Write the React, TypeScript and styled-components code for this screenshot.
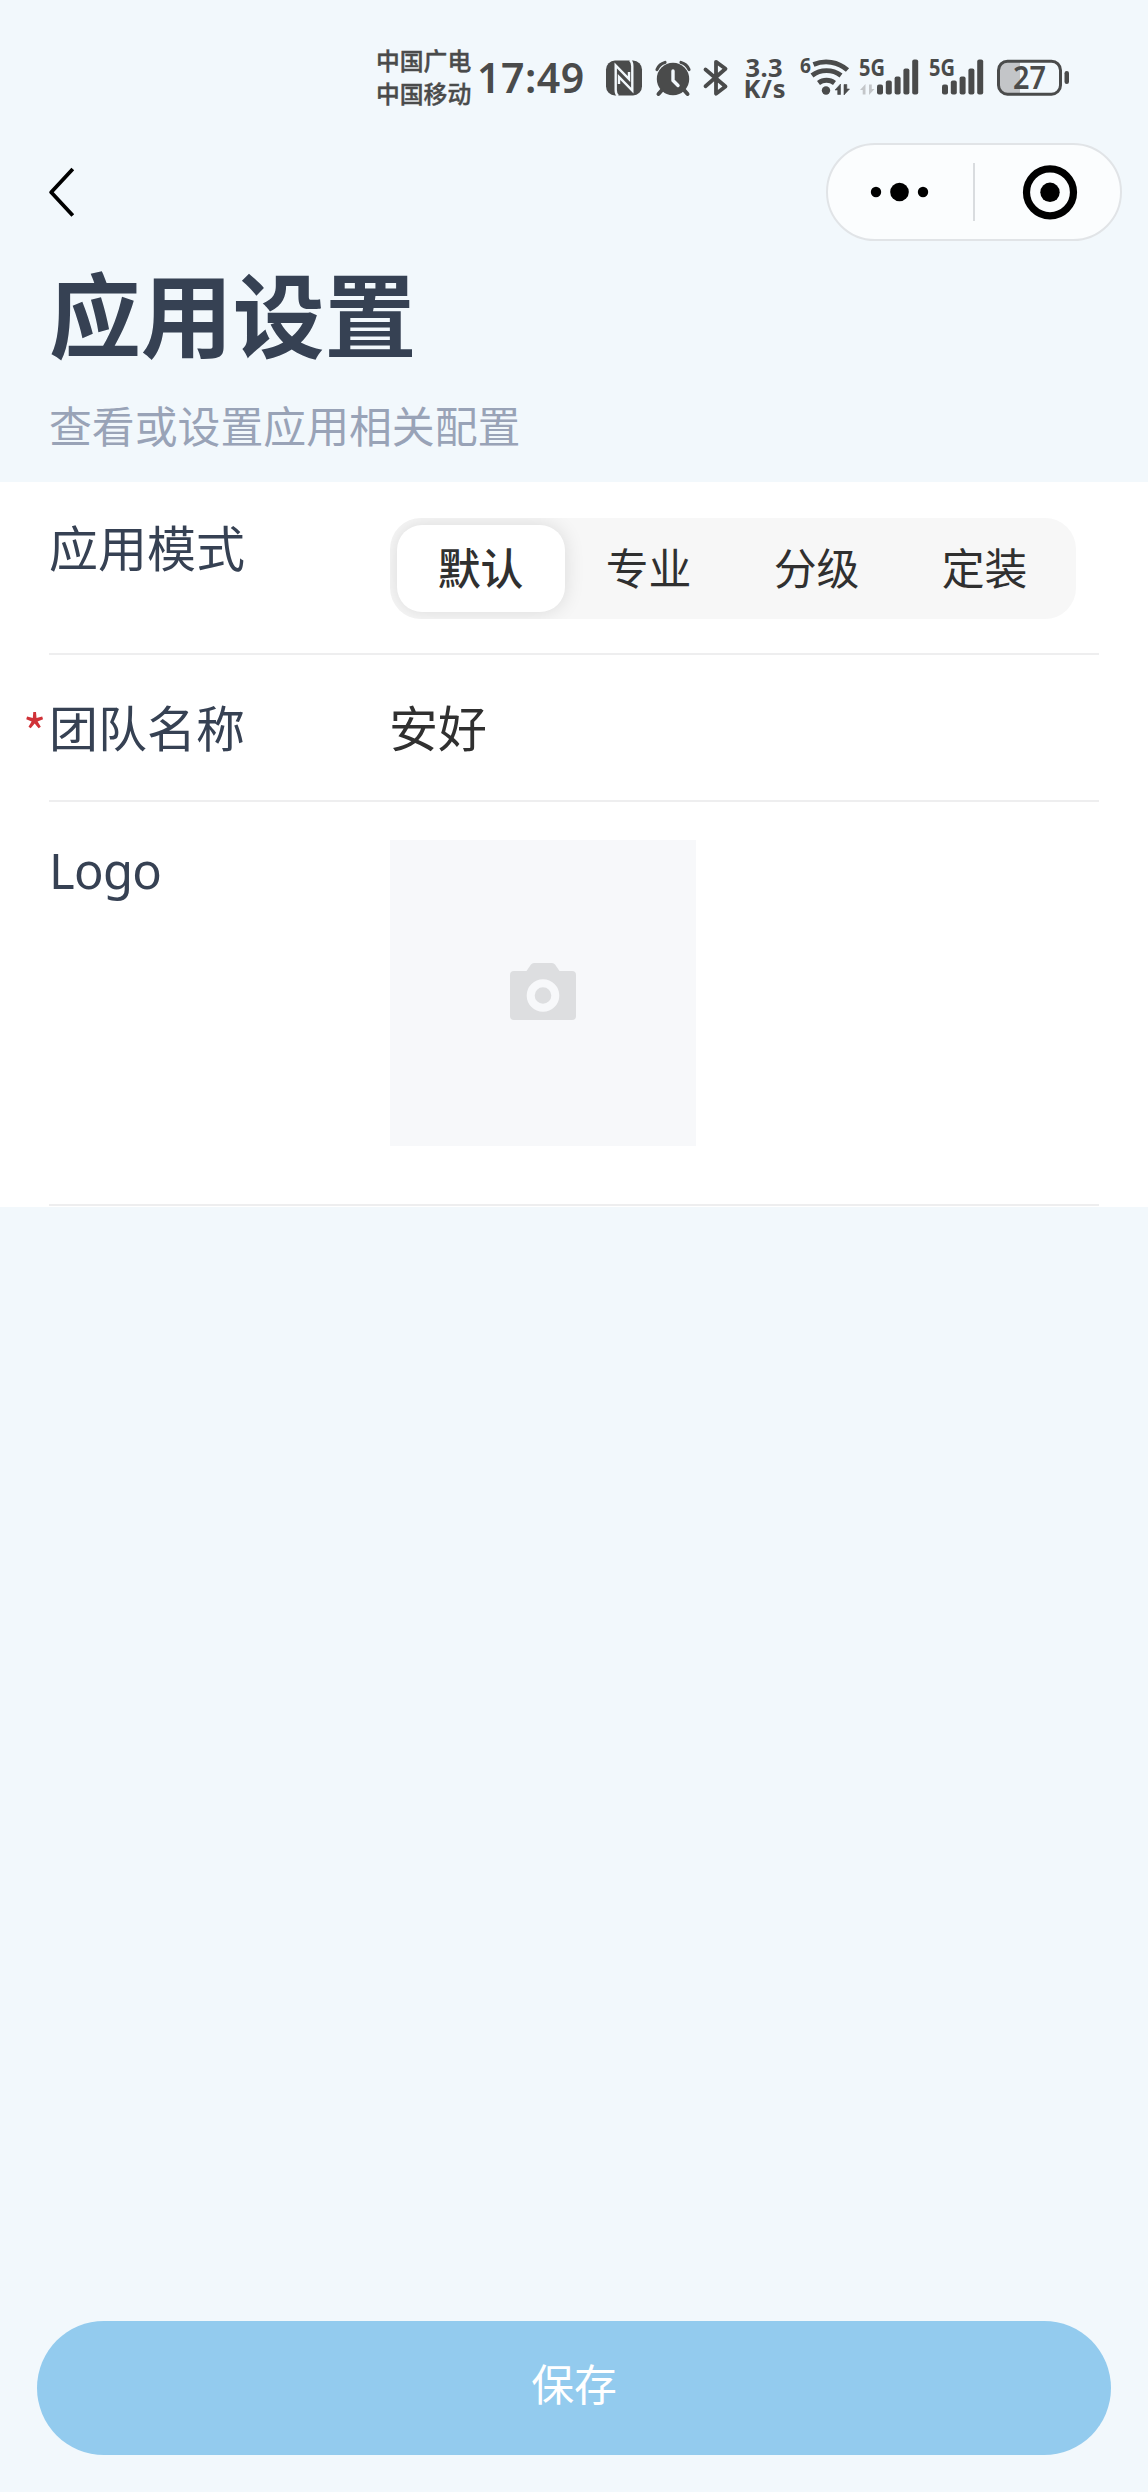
import React from 'react';
import styled, { createGlobalStyle } from 'styled-components';

const INK = '#4a4b4b';

const GlobalStyle = createGlobalStyle`
  *, *::before, *::after { box-sizing: border-box; }
  html, body { margin: 0; padding: 0; }
  body {
    background: #f2f8fc;
    font-family: "Noto Sans CJK SC", "Noto Sans", sans-serif;
    -webkit-font-smoothing: antialiased;
  }
  button { font: inherit; border: 0; padding: 0; margin: 0; background: none; }
`;

const Screen = styled.div`
  width: 1148px;
  height: 2492px;
  display: flex;
  flex-direction: column;
  background: #f2f8fc;
  overflow: hidden;
`;

const StatusBar = styled.header`
  height: 143px;
  padding: 46px 0 0 376px;
  display: flex;
  align-items: flex-start;
  color: ${INK};
`;

const Carriers = styled.div`
  width: 101px;
  margin-top: -3px;
  display: flex;
  flex-direction: column;
  align-items: flex-start;
  font-size: 23.8px;
  line-height: 33px;
  font-weight: 500;
  white-space: nowrap;
  -webkit-text-stroke: 0.4px ${INK};
`;

const Clock = styled.div`
  width: 128px;
  height: 62px;
  font-family: "Noto Sans", sans-serif;
  font-weight: 600;
  font-size: 41px;
  line-height: 62px;
  letter-spacing: 0.5px;
  white-space: nowrap;
`;

const StatusIcons = styled.svg`
  display: block;
  width: 480px;
  height: 62px;
  flex: none;
`;

const NavBar = styled.nav`
  height: 98px;
  padding: 0 26px 0 49px;
  display: flex;
  align-items: center;
  justify-content: space-between;
`;

const BackButton = styled.button`
  display: flex;
  width: 28px;
  height: 52px;
`;

const Capsule = styled.div`
  width: 296px;
  height: 98px;
  border: 2px solid #e1e4e7;
  border-radius: 49px;
  background: #fbfdfe;
  display: flex;
  align-items: center;
`;

const CapsuleButton = styled.button`
  flex: 1;
  height: 58px;
  display: flex;
  align-items: center;
  justify-content: center;
`;

const CapsuleDivider = styled.span`
  width: 2px;
  height: 58px;
  background: #d9dcdf;
`;

const Heading = styled.section`
  height: 241px;
  padding: 1px 49px 0;
`;

const Title = styled.h1`
  margin: 0;
  font-size: 91.84px;
  line-height: 138px;
  font-weight: 700;
  color: #364153;
`;

const Subtitle = styled.p`
  margin: 12px 0 0;
  font-size: 42.86px;
  line-height: 64px;
  color: #99a3b7;
`;

const Form = styled.main`
  height: 725px;
  padding: 0 49px;
  background: #fff;
`;

const Row = styled.div<{ $height: number; $top: number }>`
  height: ${(p) => p.$height}px;
  padding-top: ${(p) => p.$top}px;
  display: grid;
  grid-template-columns: 341px 1fr;
  align-items: start;
  border-bottom: 2px solid #eeeeef;
`;

const Label = styled.label<{ $shift?: number }>`
  position: relative;
  margin-top: ${(p) => p.$shift ?? 0}px;
  font-size: 48.98px;
  line-height: 64px;
  color: #364153;
`;

const LatinLabel = styled(Label)`
  font-family: "Noto Sans", sans-serif;
  letter-spacing: -0.7px;
`;

const RequiredMark = styled.span`
  position: absolute;
  left: -26px;
  top: 4px;
  font-size: 50px;
  color: #d03238;
`;

const Value = styled.div`
  margin-left: -1px;
  font-size: 48.98px;
  line-height: 64px;
  color: #303030;
`;

const Segmented = styled.div`
  width: 686px;
  height: 101px;
  padding: 7px;
  display: flex;
  border-radius: 31px;
  background: #f7f7f7;
  overflow: hidden;
`;

const Segment = styled.button<{ $active?: boolean }>`
  flex: 1;
  height: 87px;
  border-radius: 25px;
  font-size: 42.86px;
  line-height: 83px;
  padding: 0 1px 4px 0;
  text-align: center;
  color: #303030;
  font-weight: ${(p) => (p.$active ? 500 : 400)};
  background: ${(p) => (p.$active ? '#fff' : 'transparent')};
  box-shadow: ${(p) => (p.$active ? '0 0 20px rgba(0, 0, 0, 0.12)' : 'none')};
`;

const Uploader = styled.button`
  width: 306px;
  height: 306px;
  padding-bottom: 3px;
  display: flex;
  align-items: center;
  justify-content: center;
  background: #f7f8fa;
`;

const Footer = styled.footer`
  margin-top: auto;
  padding: 0 37px 37px;
`;

const SaveButton = styled.button`
  display: block;
  width: 100%;
  height: 134px;
  padding-bottom: 11px;
  border-radius: 67px;
  background: #93cbee;
  color: #fff;
  font-size: 42.86px;
  line-height: 123px;
  text-align: center;
`;

const MODES = ['默认', '专业', '分级', '定装'];

function SignalBars({ x }: { x: number }) {
  const heights = [10, 14, 18, 26, 35];
  return (
    <g fill={INK}>
      {heights.map((h, i) => (
        <rect key={h} x={x + i * 8.8} y={94.5 - h} width={6} height={h} rx={2} />
      ))}
    </g>
  );
}

function StatusGlyphs() {
  return (
    <StatusIcons viewBox="605 46 480 62" fontFamily="'Noto Sans', sans-serif" fontWeight="600" fill={INK}>
      {/* NFC */}
      <rect x="606" y="60.5" width="36" height="35" rx="9" />
      <path d="M618 96q-2.300-2-2.300-6V65.500L629 79V72M630 60q2.300 2 2.300 6V90.500L619 77V84" fill="none" stroke="#f2f8fc" strokeWidth="2.4" />
      {/* alarm */}
      <circle cx="673" cy="79" r="16.2" />
      <path d="M657 69.500a12 12 0 0 1 8-7M689 69.500a12 12 0 0 0-8-7" fill="none" stroke={INK} strokeWidth="3.2" strokeLinecap="round" />
      <path d="M662 90l-3.500 4M684 90l3.500 4" stroke={INK} strokeWidth="4" strokeLinecap="round" />
      <path d="M673 71v9.500l5 5" fill="none" stroke="#f2f8fc" strokeWidth="3.4" strokeLinecap="round" strokeLinejoin="round" />
      {/* bluetooth */}
      <path d="M705.500 69.500l20 17-9.500 7.200V61.800l9.500 7-20 17.500" fill="none" stroke={INK} strokeWidth="3.8" strokeLinecap="round" strokeLinejoin="round" />
      {/* network speed */}
      <text x="745.500" y="76.500" fontSize="25.500" fontWeight="700" textLength="37">3.3</text>
      <text x="743.500" y="97.500" fontSize="25.500" fontWeight="700" textLength="42">K/s</text>
      {/* wifi */}
      <text x="800" y="73" fontSize="22" fontWeight="700" textLength="11" lengthAdjust="spacingAndGlyphs">6</text>
      <g fill="none" stroke={INK} strokeWidth="4.800">
        <path d="M813.500 64.500a32 32 0 0 1 34 5.500" />
        <path d="M812 75.500a24 24 0 0 1 29 0" />
        <path d="M818.500 83a13 13 0 0 1 16 0" />
      </g>
      <circle cx="826" cy="90.500" r="4.200" />
      <path d="M835 90l5.500-6v10.500h-2.800V90zM849.500 89l-5.500 6V84.500h2.800V89z" stroke={INK} strokeWidth="0.6" />
      {/* sim 1 */}
      <text x="859" y="76" fontSize="22.500" fontWeight="700" textLength="26" lengthAdjust="spacingAndGlyphs">5G</text>
      <path d="M860 90l5.500-6v10.500h-2.800V90zM874.500 89l-5.500 6V84.500h2.800V89z" fill="#c3c6c9" />
      <SignalBars x={877} />
      {/* sim 2 */}
      <text x="929" y="76" fontSize="22.500" fontWeight="700" textLength="26" lengthAdjust="spacingAndGlyphs">5G</text>
      <SignalBars x={942} />
      {/* battery */}
      <path d="M1006 61h14v33h-14a8 8 0 0 1-8-8V69a8 8 0 0 1 8-8z" fill="#c3c5c8" />
      <rect x="998.500" y="61.200" width="62" height="33" rx="9" fill="none" stroke={INK} strokeWidth="3" />
      <rect x="1064.500" y="71" width="4.500" height="13" rx="2.200" />
      <text x="1013" y="88.500" fontSize="32" textLength="33" lengthAdjust="spacingAndGlyphs">27</text>
    </StatusIcons>
  );
}

export default function App() {
  return (
    <Screen>
      <GlobalStyle />
      <StatusBar>
        <Carriers>
          <span>中国广电</span>
          <span>中国移动</span>
        </Carriers>
        <Clock>17:49</Clock>
        <StatusGlyphs />
      </StatusBar>

      <NavBar>
        <BackButton aria-label="返回">
          <svg width="28" height="52" viewBox="0 0 28 52">
            <path d="M23.800 3L2.200 26.300 23.800 49.500" fill="none" stroke="#000" strokeWidth="3.800" strokeLinejoin="round" />
          </svg>
        </BackButton>
        <Capsule>
          <CapsuleButton aria-label="更多">
            <svg width="62" height="20" viewBox="0 0 62 20">
              <circle cx="6" cy="10" r="5.200" />
              <circle cx="29.500" cy="10" r="9.300" />
              <circle cx="53" cy="10" r="5.200" />
            </svg>
          </CapsuleButton>
          <CapsuleDivider />
          <CapsuleButton aria-label="关闭">
            <svg width="60" height="56" viewBox="0 0 60 56">
              <circle cx="32" cy="28.300" r="23.500" fill="none" stroke="#000" strokeWidth="7.200" />
              <circle cx="32" cy="28.300" r="9.700" />
            </svg>
          </CapsuleButton>
        </Capsule>
      </NavBar>

      <Heading>
        <Title>应用设置</Title>
        <Subtitle>查看或设置应用相关配置</Subtitle>
      </Heading>

      <Form>
        <Row $height={173} $top={36}>
          <Label $shift={-4}>应用模式</Label>
          <Segmented>
            {MODES.map((mode, i) => (
              <Segment key={mode} $active={i === 0}>{mode}</Segment>
            ))}
          </Segmented>
        </Row>
        <Row $height={147} $top={39}>
          <Label>
            <RequiredMark>*</RequiredMark>
            团队名称
          </Label>
          <Value>安好</Value>
        </Row>
        <Row $height={404} $top={38}>
          <LatinLabel $shift={-2}>Logo</LatinLabel>
          <Uploader aria-label="上传图片">
            <svg width="66" height="58" viewBox="0 0 66 58">
              <path d="M4 8h12.500L21 1.500Q22 0 24 0h18q2 0 3 1.500L49.500 8H62a4 4 0 0 1 4 4v41a4 4 0 0 1-4 4H4a4 4 0 0 1-4-4V12a4 4 0 0 1 4-4z" fill="#dddee0" />
              <circle cx="33" cy="32.500" r="12.300" fill="none" stroke="#f7f8fa" strokeWidth="8" />
            </svg>
          </Uploader>
        </Row>
      </Form>

      <Footer>
        <SaveButton>保存</SaveButton>
      </Footer>
    </Screen>
  );
}
